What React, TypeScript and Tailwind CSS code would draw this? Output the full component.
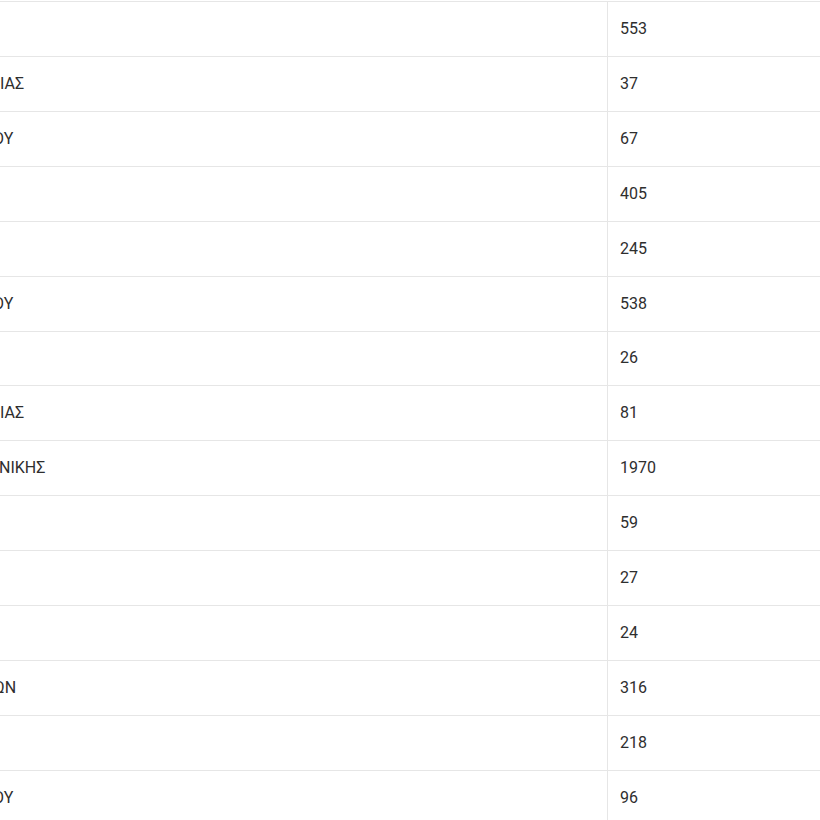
import React from "react";

type Row = { name: string; shift: string; value: string };

const rows: Row[] = [
  { name: "", shift: "ml-0", value: "553" },
  { name: "ΙΑΣ", shift: "ml-0", value: "37" },
  { name: "ΟΥ", shift: "ml-[-7px]", value: "67" },
  { name: "", shift: "ml-0", value: "405" },
  { name: "", shift: "ml-0", value: "245" },
  { name: "ΟΥ", shift: "ml-[-7px]", value: "538" },
  { name: "", shift: "ml-0", value: "26" },
  { name: "ΙΑΣ", shift: "ml-0", value: "81" },
  { name: "ΝΙΚΗΣ", shift: "ml-[-1px]", value: "1970" },
  { name: "", shift: "ml-0", value: "59" },
  { name: "", shift: "ml-0", value: "27" },
  { name: "", shift: "ml-0", value: "24" },
  { name: "ΩΝ", shift: "ml-[-6px]", value: "316" },
  { name: "", shift: "ml-0", value: "218" },
  { name: "ΟΥ", shift: "ml-[-7px]", value: "96" },
];

export default function App() {
  return (
    <div
      className="w-[820px] h-[820px] overflow-hidden bg-white text-[16px] text-[#2e2e2e]"
      style={{ fontFamily: "Roboto, 'Noto Sans', Arial, sans-serif" }}
    >
      <div className="h-[1px]" />
      <div className="flex flex-col">
        {rows.map((r, i) => (
          <div key={i} className="flex h-[54.93px] border-t border-[#e6e6e6]">
            <div className="w-[608px] border-r border-[#e6e6e6] overflow-hidden flex items-center">
              <span className={`${r.shift} whitespace-nowrap`}>{r.name}</span>
            </div>
            <div className="flex-1 flex items-center pl-[12px]">{r.value}</div>
          </div>
        ))}
      </div>
    </div>
  );
}
